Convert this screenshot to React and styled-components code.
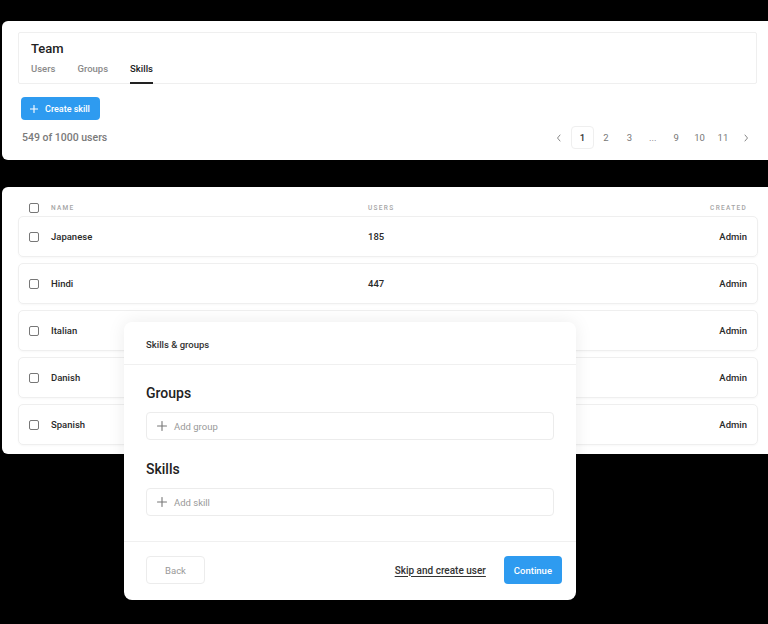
import React from "react";
import styled, { createGlobalStyle } from "styled-components";

const Global = createGlobalStyle`
  html, body { margin: 0; padding: 0; background: #000; overflow: hidden; }
  body { font-family: Roboto, "Liberation Sans", Arial, sans-serif; -webkit-font-smoothing: antialiased; }
  * { box-sizing: border-box; }
`;

const Page = styled.div`
  position: relative;
  width: 768px;
  height: 624px;
  padding: 21px 0 0 2px;
  display: flex;
  flex-direction: column;
  gap: 27px;
`;

const Card = styled.div`
  background: #fff;
  width: 774px;
  border-radius: 6px;
  padding: ${(p) => p.$pad};
  display: flex;
  flex-direction: column;
`;

const HeaderBox = styled.div`
  width: 739px;
  height: 52px;
  border: 1px solid #efefef;
  border-radius: 2px;
  padding: 8px 0 0 12px;
  display: flex;
  flex-direction: column;
`;

const Title = styled.div`
  font-size: 13px;
  font-weight: 500;
  color: #222;
  line-height: 16px;
`;

const Tabs = styled.div`
  display: flex;
  gap: 22px;
  margin-top: 7px;
`;

const Tab = styled.div`
  font-size: 9.5px;
  font-weight: 500;
  color: ${(p) => (p.$active ? "#222" : "#8a8a8a")};
  padding-bottom: 8px;
  border-bottom: 2px solid ${(p) => (p.$active ? "#222" : "transparent")};
  line-height: 10px;
`;

const PrimaryButton = styled.button`
  height: ${(p) => p.$h || 23}px;
  padding: ${(p) => p.$pad || "0 10px 0 9px"};
  background: #2e9bf0;
  color: #fff;
  border: none;
  border-radius: 4px;
  font-family: inherit;
  font-size: ${(p) => p.$fs || 9}px;
  font-weight: 500;
  display: inline-flex;
  align-items: center;
  gap: 7px;
`;

const CreateRow = styled.div`
  margin-top: 13px;
  padding-left: 3px;
  display: flex;
`;

const CountRow = styled.div`
  margin-top: 6px;
  width: 740px;
  height: 23px;
  display: flex;
  align-items: center;
  justify-content: space-between;
  padding-left: 4px;
`;

const Count = styled.div`
  font-size: 10.5px;
  font-weight: 500;
  color: #7a7a7a;
`;

const Pager = styled.div`
  display: flex;
  align-items: center;
`;

const PageItem = styled.div`
  width: 23.4px;
  height: 23px;
  display: flex;
  align-items: center;
  justify-content: center;
  font-size: 9.5px;
  color: ${(p) => (p.$active ? "#333" : "#777")};
  font-weight: ${(p) => (p.$active ? 500 : 400)};
  border: 1px solid ${(p) => (p.$active ? "#efefef" : "transparent")};
  border-radius: 4px;
`;

const Table = styled.div`
  width: 740px;
  display: flex;
  flex-direction: column;
  gap: 6px;
`;

const Grid = styled.div`
  display: grid;
  grid-template-columns: 10px 305px 1fr auto;
  column-gap: 12px;
  align-items: center;
  padding: 0 10px;
  border: 1px solid transparent;
`;

const HeadRow = styled(Grid)`
  height: 20px;
  margin-bottom: -8px;
  margin-top: 1px;
`;

const Row = styled(Grid)`
  height: 41px;
  border-color: #efefef;
  border-radius: 5px;
  box-shadow: 0 1px 2px rgba(0, 0, 0, 0.03);
`;

const Check = styled.span`
  width: 10px;
  height: 10px;
  border: 1.3px solid #777;
  border-radius: 2px;
  display: block;
`;

const HeadLabel = styled.span`
  font-size: 6.5px;
  letter-spacing: 1.3px;
  font-weight: 500;
  color: #a5a5a5;
  text-transform: uppercase;
  text-align: ${(p) => (p.$right ? "right" : "left")};
`;

const Cell = styled.span`
  font-size: 9.5px;
  font-weight: 500;
  color: #2a2a2a;
  text-align: ${(p) => (p.$right ? "right" : "left")};
`;

const Modal = styled.div`
  position: absolute;
  left: 124px;
  top: 322px;
  width: 452px;
  height: 278px;
  background: #fff;
  border-radius: 8px;
  box-shadow: 0 0 18px rgba(0, 0, 0, 0.08);
  display: flex;
  flex-direction: column;
`;

const ModalHead = styled.div`
  height: 43px;
  border-bottom: 1px solid #f0f0f0;
  padding: 2px 22px 0;
  display: flex;
  align-items: center;
  font-size: 9.5px;
  font-weight: 500;
  color: #333;
`;

const ModalBody = styled.div`
  flex: 1;
  padding: 18px 22px 0;
  border-bottom: 1px solid #f0f0f0;
  display: flex;
  flex-direction: column;
`;

const SectionTitle = styled.div`
  font-size: 14px;
  font-weight: 500;
  color: #222;
  line-height: 20px;
  margin-top: ${(p) => p.$mt || 0}px;
`;

const AddInput = styled.div`
  margin-top: 9px;
  height: 28px;
  border: 1px solid #ececec;
  border-radius: 4px;
  display: flex;
  align-items: center;
  gap: 7px;
  padding-left: 10px;
  font-size: 9.5px;
  color: #999;
`;

const ModalFoot = styled.div`
  height: 58px;
  padding: 0 14px 2px 22px;
  display: flex;
  align-items: center;
`;

const GhostButton = styled.button`
  width: 59px;
  height: 28px;
  background: #fff;
  border: 1px solid #ececec;
  border-radius: 4px;
  font-family: inherit;
  font-size: 9.5px;
  color: #999;
`;

const LinkText = styled.span`
  margin-left: auto;
  margin-right: 18px;
  font-size: 10px;
  font-weight: 500;
  color: #333;
  text-decoration: underline;
  text-underline-offset: 2px;
`;

const Plus = ({ size = 10, color = "currentColor", w = 1.2 }) => (
  <svg width={size} height={size} viewBox="0 0 10 10">
    <path d="M5 0.5V9.5M0.5 5H9.5" stroke={color} strokeWidth={w} strokeLinecap="round" />
  </svg>
);

const Chevron = ({ dir }) => (
  <svg width="6" height="8" viewBox="0 0 6 8">
    <path
      d={dir === "left" ? "M4 1L1.5 4L4 7" : "M2 1L4.5 4L2 7"}
      stroke="#888"
      strokeWidth="1"
      fill="none"
      strokeLinecap="round"
      strokeLinejoin="round"
    />
  </svg>
);

const rows = [
  { name: "Japanese", users: "185" },
  { name: "Hindi", users: "447" },
  { name: "Italian", users: "" },
  { name: "Danish", users: "" },
  { name: "Spanish", users: "" },
];

export default function App() {
  return (
    <>
      <Global />
      <Page>
        <Card $pad="11px 15px 11px 16px">
          <HeaderBox>
            <Title>Team</Title>
            <Tabs>
              <Tab>Users</Tab>
              <Tab>Groups</Tab>
              <Tab $active>Skills</Tab>
            </Tabs>
          </HeaderBox>
          <CreateRow>
            <PrimaryButton>
              <Plus size={8} w={1.4} />
              Create skill
            </PrimaryButton>
          </CreateRow>
          <CountRow>
            <Count>549 of 1000 users</Count>
            <Pager>
              <PageItem><Chevron dir="left" /></PageItem>
              <PageItem $active>1</PageItem>
              <PageItem>2</PageItem>
              <PageItem>3</PageItem>
              <PageItem>...</PageItem>
              <PageItem>9</PageItem>
              <PageItem>10</PageItem>
              <PageItem>11</PageItem>
              <PageItem><Chevron dir="right" /></PageItem>
            </Pager>
          </CountRow>
        </Card>

        <Card $pad="10px 15px 9px 16px">
          <Table>
            <HeadRow>
              <Check />
              <HeadLabel>Name</HeadLabel>
              <HeadLabel>Users</HeadLabel>
              <HeadLabel $right>Created</HeadLabel>
            </HeadRow>
            {rows.map((r) => (
              <Row key={r.name}>
                <Check />
                <Cell>{r.name}</Cell>
                <Cell>{r.users}</Cell>
                <Cell $right>Admin</Cell>
              </Row>
            ))}
          </Table>
        </Card>

        <Modal>
          <ModalHead>Skills &amp; groups</ModalHead>
          <ModalBody>
            <SectionTitle>Groups</SectionTitle>
            <AddInput>
              <Plus size={10} color="#777" w={1.1} />
              Add group
            </AddInput>
            <SectionTitle $mt={19}>Skills</SectionTitle>
            <AddInput>
              <Plus size={10} color="#777" w={1.1} />
              Add skill
            </AddInput>
          </ModalBody>
          <ModalFoot>
            <GhostButton>Back</GhostButton>
            <LinkText>Skip and create user</LinkText>
            <PrimaryButton $h={28} $pad="0 10px" $fs={9.5}>Continue</PrimaryButton>
          </ModalFoot>
        </Modal>
      </Page>
    </>
  );
}
